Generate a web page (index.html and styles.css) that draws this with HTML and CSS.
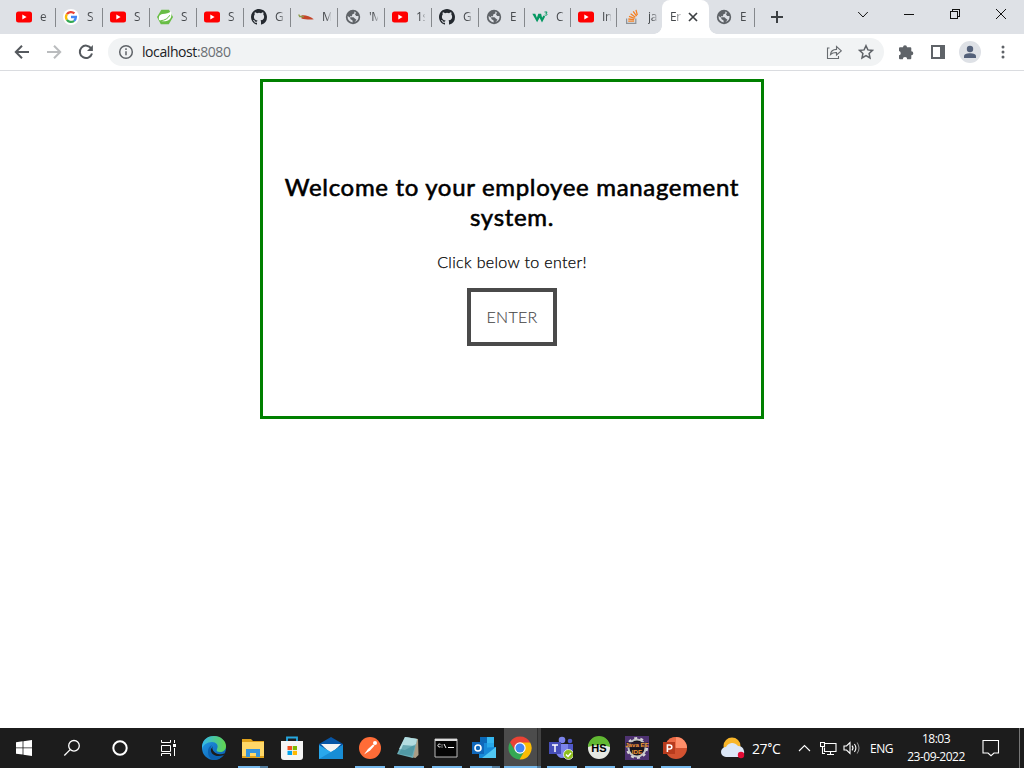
FILE: index.html
```html
<!DOCTYPE html>
<html lang="en">
<head>
<meta charset="utf-8">
<title>Employee management</title>
<link rel="stylesheet" href="styles.css">
</head>
<body>
<svg class="defs" width="0" height="0">
  <symbol id="youtube" viewBox="0 0 16 16"><rect y="2.5" width="16" height="11" rx="2.5" fill="#f00"/><path d="M6.3 5.6v4.8L10.6 8z" fill="#fff"/></symbol>
  <symbol id="google" viewBox="0 0 16 16"><circle cx="8" cy="8" r="8" fill="#fff"/><g fill="none" stroke-width="2.3"><path d="M3.9 5.2A5 5 0 0 1 11.4 4.4" stroke="#ea4335"/><path d="M3.9 5.2A5 5 0 0 0 3.9 10.8" stroke="#fbbc05"/><path d="M3.9 10.8A5 5 0 0 0 11.1 11.8" stroke="#34a853"/><path d="M8 8H12.9A5 5 0 0 1 11.1 11.8" stroke="#4285f4"/></g></symbol>
  <symbol id="spring" viewBox="0 0 16 16"><path d="M4.400 .7h7.600L16 8l-4.200 7.300H3.800L0 8z" fill="#68bd45"/><path d="M14 2.300C15.200 7 14 11.200 9.500 12 6.500 12.500 3.600 12.300 2.200 11 1.200 8 2.400 5.600 5.600 5 9 4.500 12 4.700 14 2.300z" fill="#fff"/><path d="M3.300 11.800C8 11.400 11 9.500 12.800 6.200" stroke="#68bd45" fill="none"/></symbol>
  <symbol id="github" viewBox="0 0 16 16"><path fill="#24292f" d="M8 0C3.58 0 0 3.58 0 8c0 3.54 2.29 6.53 5.47 7.59.4.07.55-.17.55-.38 0-.19-.01-.82-.01-1.49-2.01.37-2.53-.49-2.69-.94-.09-.23-.48-.94-.82-1.13-.28-.15-.68-.52-.01-.53.63-.01 1.08.58 1.23.82.72 1.21 1.87.87 2.33.66.07-.52.28-.87.51-1.07-1.78-.2-3.64-.89-3.64-3.95 0-.87.31-1.59.82-2.15-.08-.2-.36-1.02.08-2.12 0 0 .67-.21 2.2.82a7.6 7.6 0 0 1 4 0c1.53-1.04 2.2-.82 2.2-.82.44 1.1.16 1.92.08 2.12.51.56.82 1.27.82 2.15 0 3.07-1.87 3.75-3.65 3.95.29.25.54.73.54 1.48 0 1.07-.01 1.93-.01 2.2 0 .21.15.46.55.38A8 8 0 0 0 16 8c0-4.42-3.58-8-8-8z"/></symbol>
  <symbol id="chili" viewBox="0 0 16 16"><path d="M3.500 6.500c3-.9 8.500 1 12.300 3.700C13 11 7 10.600 3.500 9.500z" fill="#c4452a"/><path d="M.7 5.500l1 2 3-.2 1 1" fill="none" stroke="#8a9a48" stroke-width="1.300"/></symbol>
  <symbol id="globe" viewBox="0 0 16 16"><circle cx="8" cy="8" r="7.200" fill="#5f6368"/><path d="M9 2.500l.6 1.700-2.400 1.200-.2 1.900H5v1h3.500l1.300 1.300 1.700 1.100-2 2.200a5.400 5.400 0 0 0 4-5.800L11.200 7 10 5.500l1-2.100zM2.600 7.700a5.500 5.500 0 0 0 5 5.700v-2L5.300 10V8.800L2.600 7z" fill="#dee1e6"/></symbol>
  <symbol id="wthree" viewBox="0 0 16 16"><path d="M.3 4.800h3l1.600 4 1.400-4h2.800l1 4 1.300-2.400 1.800 1-3.200 6-2.400-4.600-2.500 4.400z" fill="#059862"/><path d="M12.500 3h2.600l-1.200 1.500c2.100 0 1.500 2.400-1.300 1.500" stroke="#059862" fill="none"/></symbol>
  <symbol id="stack" viewBox="0 0 16 16"><path d="M2.600 9.500v4.800h9.200V9.500" fill="none" stroke="#8d9297" stroke-width="1.200"/><g stroke="#f48024" stroke-width="1.300"><path d="M4.200 12.200h6M4.300 10l5.900.7M5 7.400l5.700 1.900M6.600 4.700l4.800 3.600M9.200 2.300l3.400 4.800M12 .9l1.300 5.200"/></g></symbol>
</svg>

<header class="tabstrip">
  <div class="tab first"><svg class="fav"><use href="#youtube"/></svg><span class="tab-title">e</span></div>
  <div class="tab"><svg class="fav"><use href="#google"/></svg><span class="tab-title">S</span></div>
  <div class="tab"><svg class="fav"><use href="#youtube"/></svg><span class="tab-title">S</span></div>
  <div class="tab"><svg class="fav"><use href="#spring"/></svg><span class="tab-title">S</span></div>
  <div class="tab"><svg class="fav"><use href="#youtube"/></svg><span class="tab-title">S</span></div>
  <div class="tab"><svg class="fav"><use href="#github"/></svg><span class="tab-title">G</span></div>
  <div class="tab"><svg class="fav"><use href="#chili"/></svg><span class="tab-title">M</span></div>
  <div class="tab"><svg class="fav"><use href="#globe"/></svg><span class="tab-title">'M</span></div>
  <div class="tab"><svg class="fav"><use href="#youtube"/></svg><span class="tab-title">1s</span></div>
  <div class="tab"><svg class="fav"><use href="#github"/></svg><span class="tab-title">G</span></div>
  <div class="tab narrow"><svg class="fav"><use href="#globe"/></svg><span class="tab-title">E</span></div>
  <div class="tab narrow"><svg class="fav"><use href="#wthree"/></svg><span class="tab-title">C</span></div>
  <div class="tab narrow"><svg class="fav"><use href="#youtube"/></svg><span class="tab-title">In</span></div>
  <div class="tab narrow"><svg class="fav"><use href="#stack"/></svg><span class="tab-title">ja</span></div>
  <div class="tab active"><span class="tab-title">En</span><svg class="close" viewBox="0 0 10 10"><path d="M1 1l8 8M9 1l-8 8"/></svg></div>
  <div class="tab after"><svg class="fav"><use href="#globe"/></svg><span class="tab-title">E</span></div>
  <div class="tab-end"></div>
  <svg class="plus" viewBox="0 0 12 12"><path d="M6 0v12M0 6h12"/></svg>
  <div class="window-controls">
    <svg viewBox="0 0 12 12"><path d="M1.200 4l4.800 5 4.800-5"/></svg>
    <svg viewBox="0 0 12 12" class="crisp"><path d="M1 6.500h10"/></svg>
    <svg viewBox="0 0 12 12" class="crisp"><path d="M1.500 3.500h7v7h-7zM3.500 3V1.500h7v7H9"/></svg>
    <svg viewBox="0 0 12 12"><path d="M1 1l10 10M11 1L1 11"/></svg>
  </div>
</header>

<nav class="toolbar">
  <svg class="nav-icon" viewBox="0 0 16 16"><path d="M15 8H2M8 1.800L1.800 8 8 14.200"/></svg>
  <svg class="nav-icon disabled" viewBox="0 0 16 16"><path d="M1 8h13M8 1.800L14.200 8 8 14.200"/></svg>
  <svg class="nav-icon" viewBox="0 0 16 16"><path d="M13.200 4.400A6.200 6.200 0 1 0 14 9.500"/><path d="M14.900 1v6H9z" class="solid"/></svg>
  <div class="omnibox">
    <svg class="info" viewBox="0 0 16 16"><circle cx="8" cy="8" r="6.300"/><path d="M8 7.200v4M8 4.300v1.600"/></svg>
    <span class="url">localhost<span class="port">:8080</span></span>
    <svg class="share" viewBox="0 0 16 16"><path d="M3.500 4H1.500v10.500h11V12M4.500 10.500c.3-3.500 2.400-5 6-5.100V2.500L15.300 6.800l-4.800 4.200V8.500C8 8.400 6 9 4.500 10.500z"/></svg>
    <svg class="star" viewBox="0 0 16 16"><path d="M8 1.700l1.900 4.200 4.600.5-3.400 3.100.9 4.500-4-2.300L4 14l.9-4.500-3.400-3.100 4.600-.5z"/></svg>
  </div>
  <svg class="ext" viewBox="0 0 16 16"><path d="M5 3.200a2 2 0 0 1 4 0h3.300q1 0 1 1v3a2 2 0 0 1 0 4v3q0 1-1 1H9.200a2.200 2.200 0 0 0-4.400 0H2q-1 0-1-1v-2.900a2.200 2.200 0 0 0 0-4.300V4.200q0-1 1-1z"/></svg>
  <svg class="panel" viewBox="0 0 14 14"><path d="M0 0h14v14H0z"/><path d="M2 2h7v10H2z" fill="#fff"/></svg>
  <div class="avatar"><svg viewBox="0 0 14 14"><circle cx="7" cy="4" r="3.200"/><path d="M1 13v-1.800C1 9 4.300 8.300 7 8.300s6 .7 6 2.900V13z"/></svg></div>
  <svg class="dots" viewBox="0 0 4 14"><circle cx="2" cy="2" r="1.500"/><circle cx="2" cy="7" r="1.500"/><circle cx="2" cy="12" r="1.500"/></svg>
</nav>

<main class="page">
  <section class="welcome">
    <h2>Welcome to your employee management<br>system.</h2>
    <p>Click below to enter!</p>
    <a class="enter">ENTER</a>
  </section>
</main>

<footer class="taskbar">
  <div class="sys"><svg width="16" height="16" viewBox="0 0 16 16" fill="#fff"><path d="M0 2.200l6.600-.9v6.200H0zM7.400 1.200L16 0v7.500H7.400zM0 8.300h6.600v6.300L0 13.700zM7.400 8.300H16V16l-8.600-1.200z"/></svg></div>
  <div class="sys"><svg width="18" height="18" viewBox="0 0 18 18" fill="none" stroke="#fff" stroke-width="1.300"><circle cx="11" cy="6.800" r="5.300"/><path d="M7.200 10.600L1.300 16.500"/></svg></div>
  <div class="sys"><svg width="18" height="18" viewBox="0 0 18 18" fill="none" stroke="#fff" stroke-width="2"><circle cx="9" cy="9" r="6.700"/></svg></div>
  <div class="sys"><svg width="17" height="16" viewBox="0 0 17 16" fill="none" stroke="#fff"><path d="M1.500 0v2.500h9V0M1.500 5.500h9v6h-9zM1.500 16v-2.500h9V16M14.500 0v3M14.500 8v8"/><path d="M13 4h3v3h-3z" fill="#fff" stroke="none"/></svg></div>

  <div class="app wide"><svg viewBox="0 0 24 24"><defs><linearGradient id="edgeA" x2="1"><stop stop-color="#32b8ef"/><stop offset="1" stop-color="#62d64b"/></linearGradient><linearGradient id="edgeB" y2="1"><stop stop-color="#239be6"/><stop offset="1" stop-color="#0759ae"/></linearGradient></defs><circle cx="12" cy="12" r="12" fill="url(#edgeB)"/><path d="M0 10C1 3 6 0 12 0c7 0 12 5 12 10 0 4-3 6-6 6-3 0-4-1-3-3 2-4-1-7-5-7C5 6 1 9 0 13z" fill="url(#edgeA)"/><path d="M10 9c-4 6 2 12 12 9-2 4-7 6-11 6C5 22 4 11 10 9z" fill="#0c60ae"/><path d="M11 10c-2 3 1 7 5 8 3 .7 5 .3 7-.8l-1 1.800c-8 3-14-1-13-6z" fill="#1c1c1c"/></svg></div>
  <div class="app wide running grouped"><svg viewBox="0 0 24 24"><path d="M1 3h9l2 2h11v17H1z" fill="#e0a21b"/><path d="M1 6h22v14H1z" fill="#ffd868"/><path d="M5 21v-8h14v8h-4v-4H9v4z" fill="#3594dc"/></svg></div>
  <div class="app wide"><svg viewBox="0 0 24 24"><path d="M7 6V1.500h10V6" fill="none" stroke="#26a8e0" stroke-width="1.800"/><path d="M1 5h22v16q0 3-3 3H4q-3 0-3-3z" fill="#f5f5f5"/><path d="M7.500 10H12v4H7.500z" fill="#f25022"/><path d="M12.700 10H17v4h-4.300z" fill="#7fba00"/><path d="M7.500 14.800H12V19H7.500z" fill="#00a4ef"/><path d="M12.700 14.800H17V19h-4.300z" fill="#ffb900"/></svg></div>
  <div class="app wide"><svg viewBox="0 0 24 24"><path d="M0 8l12-7 12 7v4H0z" fill="#0755a5"/><path d="M2 8h20l-8 8h-4z" fill="#f4f4f4"/><path d="M0 9l12 7 12-7v14H0z" fill="#29a8ed"/><path d="M0 23L24 9v14z" fill="#188dd5"/></svg></div>
  <div class="app wide running"><svg viewBox="0 0 24 24"><circle cx="12" cy="12" r="11" fill="#ff6c37"/><path d="M6 18.500l4-5.500 5-4.500 1.600 1-4.500 5z" fill="#fff"/><circle cx="17" cy="7" r="2" fill="#fff"/></svg></div>
  <div class="app running"><svg viewBox="0 0 24 24"><path d="M9 1l13 2 .5 16-3 3-5-1z" fill="#a99c85"/><path d="M9 1l12 2-4 19L1 18z" fill="#6badb7"/><path d="M9 1l12 2-1 5-11 6-6-1z" fill="#b3dce0"/><path d="M7 9l-4 9 13 2 3-10z" fill="#438f9b" opacity=".65"/></svg></div>
  <div class="app running"><svg viewBox="0 0 24 24"><path d="M1 3h22v18H1z" fill="#050505" stroke="#b9b9b9"/><path d="M1 3h22v2H1z" fill="#ddd"/><path d="M6.500 8.300C3 7 3 12 6.500 10.800M8 8.500v1M8 10.500v1M10 8l2 4M14 11.500h6" stroke="#fff" fill="none"/></svg></div>
  <div class="app running grouped"><svg viewBox="0 0 24 24"><path d="M8 1h14v17H8z" fill="#1689d8"/><path d="M15 1h7v6h-7z" fill="#35b8f1"/><path d="M15 7h7v6h-7z" fill="#28a8ea"/><path d="M8 1h7v6H8z" fill="#0b69b8"/><path d="M7 12l17-1v11H7z" fill="#1689d8"/><path d="M24 11v11H10z" fill="#50c7f3"/><path d="M0 6h12v12H0z" fill="#0f67ba"/><circle cx="6" cy="12" r="3" fill="none" stroke="#fff" stroke-width="1.600"/></svg></div>
  <div class="app running current"><svg viewBox="0 0 24 24"><path d="M2 6.200A11.500 11.500 0 0 1 22 6.200L12 12z" fill="#ea4335"/><path d="M2 6.200A11.500 11.500 0 0 0 11.500 23.500L17 15l-5-3-5 2z" fill="#34a853"/><path d="M12 6.500h10.200A11.500 11.500 0 0 1 11.500 23.500L17 14z" fill="#fbbc05"/><path d="M2 6.200L7 14.500l5-8h10z" fill="#ea4335"/><circle cx="12" cy="12" r="5.700" fill="#fff"/><circle cx="12" cy="12" r="4.500" fill="#4285f4"/></svg></div>
  <div class="app running"><svg viewBox="0 0 24 24"><circle cx="13" cy="4" r="3.300" fill="#7b83eb"/><circle cx="21" cy="5" r="2.300" fill="#5059c9"/><path d="M15 8h9v8q-1 4-5 4h-4z" fill="#5059c9"/><path d="M7 8h12v9q0 5-6 5-4 0-6-5z" fill="#7b83eb"/><path d="M0 6h12v12H0z" fill="#464eb8"/><path d="M3 9h6M6 9v7" stroke="#fff" stroke-width="1.500"/><circle cx="19.500" cy="18.500" r="5" fill="#8dbe1c" stroke="#fff" stroke-width=".7"/><path d="M17 18.500l2 2 3-3.500" fill="none" stroke="#fff" stroke-width="1.500"/></svg></div>
  <div class="app running"><svg viewBox="0 0 24 24"><circle cx="12" cy="12" r="11" fill="#e6e9e3"/><path d="M1 11a11 11 0 0 1 22 0q-11-4-22 0z" fill="#61b832"/><text x="12" y="16" text-anchor="middle" class="hs">HS</text></svg></div>
  <div class="app running"><svg viewBox="0 0 24 24"><path d="M0 0h24v24H0z" fill="#4e3271"/><circle cx="12" cy="12" r="8.500" fill="#17141c" stroke="#c5c5c5" stroke-width="2"/><circle cx="12" cy="12" r="10" fill="none" stroke="#d7d7d7" stroke-width="2" stroke-dasharray="3 3.280"/><path d="M1 6h22v5.500H1z" fill="#2a1b33" opacity=".8"/><text x="12" y="11" text-anchor="middle" class="java">Java EE</text><text x="12" y="17.500" text-anchor="middle" class="java">IDE</text></svg></div>
  <div class="app running"><svg viewBox="0 0 24 24"><circle cx="13" cy="12" r="11" fill="#d35230"/><path d="M13 1a11 11 0 0 1 11 11H13z" fill="#ff8f6b"/><path d="M3 7a11 11 0 0 1 10-6v11z" fill="#ed6c47"/><path d="M0 6h12v12H0z" fill="#b83b1d"/><path d="M4.400 16V9H6.500q2.300 0 2.300 2t-2.300 2h-2" fill="none" stroke="#fff" stroke-width="1.600"/></svg></div>

  <div class="tray">
    <svg class="weather" viewBox="0 0 24 22"><circle cx="11" cy="9" r="8.500" fill="#f9b62a"/><path d="M5 20a5 5 0 0 1 0-10 7 7 0 0 1 12-1q5 0 6 5t-4 6z" fill="#dce7f7"/><circle cx="20" cy="18" r="3.200" fill="#e30b35"/></svg>
    <span class="temp">27<span class="degree">°</span>C</span>
    <svg class="chevron" viewBox="0 0 13 8"><path d="M1 7l5.500-5.500L12 7"/></svg>
    <svg class="network" viewBox="0 0 17 15"><path d="M5 2.500h11v8H4.500v-4M10.500 10.500v3M7 13.500h7M.5 1.500h4v4h-4zM2.500 5.500v7H5"/></svg>
    <svg class="volume" viewBox="0 0 17 14"><path d="M1 5v4h2.500L7 12.500v-11L3.500 5zM9 4.700q2 2.300 0 4.600M11.400 3q3 4 0 8"/><path d="M14 1.500q4 5.500 0 11" opacity=".5"/></svg>
    <span class="lang">ENG</span>
    <div class="clock"><span class="time">18:03</span><span class="date">23-09-2022</span></div>
    <svg class="notice" viewBox="0 0 18 17"><path d="M1 .5h15.500v12.500H12l-3 2.700L6 13H1z"/></svg>
    <div class="desktop-edge"></div>
  </div>
</footer>
</body>
</html>
```

FILE: styles.css
```css
* { box-sizing: border-box; }
body { margin: 0; width: 1024px; height: 768px; overflow: hidden; background: #fff; display: flex; flex-direction: column; font-family: "Open Sans", sans-serif; }
svg { display: block; flex: none; }
.defs { position: absolute; }

.tabstrip { height: 34px; background: #dee1e6; display: flex; padding-left: 8px; flex: none; }
.tab { width: 47px; height: 34px; display: flex; align-items: center; flex: none; padding-left: 8px; background: linear-gradient(#85888c, #85888c) 0 8px / 1px 19px no-repeat; }
.tab.first, .tab.after { background: none; }
.tab.after { width: 45px; padding-left: 7px; }
.narrow { width: 46px; }
.tab.active { width: 47px; background: #fff; border-radius: 8px 8px 0 0; padding-left: 8px; position: relative; }
.active::before, .active::after { content: ""; position: absolute; bottom: 0; width: 8px; height: 8px; }
.active::before { left: -8px; background: radial-gradient(circle at 0 0, transparent 7.5px, #fff 8px); }
.active::after { right: -8px; background: radial-gradient(circle at 100% 0, transparent 7.5px, #fff 8px); }
.fav { width: 16px; height: 16px; }
.tab-title { width: 9px; margin-left: 8px; overflow: hidden; white-space: nowrap; font-size: 12px; line-height: 18px; letter-spacing: -.3px; color: #45484c; -webkit-mask-image: linear-gradient(90deg, #000 45%, rgba(0,0,0,.2)); }
.active .tab-title { width: 11px; margin-left: 0; }
.close { width: 10px; height: 10px; margin-left: 7px; fill: none; stroke: #3c4043; stroke-width: 1.7; }
.tab-end { width: 1px; height: 19px; margin-top: 8px; background: #85888c; }
.plus { width: 12px; height: 12px; margin: 11px 0 0 16px; stroke: #3c4043; stroke-width: 2; }
.window-controls { display: flex; gap: 34px; margin: 8px 0 0 74px; }
.window-controls svg { width: 12px; height: 12px; stroke: #111; fill: none; }
.crisp { shape-rendering: crispEdges; }

.toolbar { height: 37px; flex: none; border-bottom: 1px solid #dadce0; display: flex; align-items: center; padding: 0 0 0 14px; }
.nav-icon { width: 16px; height: 16px; margin-right: 16px; fill: none; stroke: #55595e; stroke-width: 2; }
.nav-icon.disabled { stroke: #babcbe; }
.nav-icon .solid { fill: #55595e; stroke: none; }
.omnibox { width: 776px; height: 28px; flex: none; margin-left: -2px; border-radius: 14px; background: #f1f3f4; display: flex; align-items: center; padding: 0 10px; }
.info { width: 16px; height: 16px; fill: none; stroke: #5f6368; stroke-width: 1.5; }
.url { width: 92px; margin-left: 8px; font-size: 14px; line-height: 20px; letter-spacing: -.42px; color: #202124; white-space: nowrap; }
.port { color: #6b6f74; }
.share { width: 16px; height: 16px; margin-left: auto; fill: none; stroke: #686c70; stroke-width: 1.1; }
.star { width: 16px; height: 16px; margin-left: 16px; fill: none; stroke: #5f6368; stroke-width: 1.5; }
.ext { width: 16px; height: 16px; margin-left: 14px; fill: #5f6368; }
.panel { width: 14px; height: 14px; margin-left: 17px; fill: #5f6368; }
.avatar { width: 22px; height: 22px; flex: none; margin-left: 14px; border-radius: 50%; background: #dee1e6; display: grid; place-items: center; }
.avatar svg { width: 14px; height: 14px; fill: #54617a; }
.dots { width: 4px; height: 14px; margin-left: 20px; fill: #5f6368; }

.page { flex: 1; padding-top: 8px; }
.welcome { width: 504px; height: 340px; margin: 0 auto; border: 3px solid green; display: flex; flex-direction: column; align-items: center; padding-top: 90px; font-family: Lato, sans-serif; color: #000; }
.welcome h2 { margin: 0; font-size: 24px; font-weight: 400; -webkit-text-stroke: .6px #000; line-height: 30px; letter-spacing: .67px; text-align: center; white-space: nowrap; }
.welcome p { margin: 20px 0 0; font-size: 16px; font-weight: 300; -webkit-text-stroke: .25px #000; line-height: 20px; letter-spacing: .34px; white-space: nowrap; }
.enter { width: 90px; height: 58px; margin-top: 16px; border: 4px solid #4a4a4a; display: grid; place-items: center; padding-bottom: 2px; font-size: 16px; font-weight: 300; -webkit-text-stroke: .15px #4a4a4a; letter-spacing: .3px; color: #4a4a4a; }

.taskbar { height: 40px; flex: none; background: #1c1c1c; display: flex; color: #fff; }
.sys { width: 48px; height: 40px; display: grid; place-items: center; flex: none; }
.app { width: 38px; height: 40px; flex: none; display: flex; justify-content: center; align-items: center; position: relative; }
.app.wide { width: 39px; }
.sys + .app { margin-left: 2px; }
.app svg { width: 24px; height: 24px; }
.running::after { content: ""; position: absolute; left: 5px; bottom: 0; width: 30px; height: 2px; background: #76b9ed; }
.grouped::after { background: linear-gradient(90deg, #76b9ed 22px, #527c9d 22px); }
.app.current { background: linear-gradient(90deg, #4c4c4c 33px, #303030 33px, #303030 34px, #424242 34px); width: 37px; margin: 0 1px; padding-right: 5px; }
.current::after { left: 0; width: 37px; background: linear-gradient(90deg, #76b9ed 33px, #527c9d 33px); }
.hs { font: bold 11px "Liberation Sans", sans-serif; }
.java { font: bold 6.2px "Liberation Sans", sans-serif; fill: #f59935; }
.tray { flex: 1; display: flex; align-items: center; margin-left: 27px; font-size: 12px; white-space: nowrap; }
.tray svg { fill: none; stroke: #fff; stroke-width: 1.1; }
.tray .weather { width: 24px; height: 22px; stroke: none; }
.temp { width: 30px; margin-left: 7px; font-size: 14px; letter-spacing: -.4px; }
.degree { font-family: Roboto, sans-serif; }
.chevron { width: 13px; height: 8px; margin-left: 16px; }
.network { width: 17px; height: 15px; margin-left: 9px; }
.volume { width: 17px; height: 14px; margin-left: 6px; }
.lang { width: 25px; margin-left: 10px; letter-spacing: -.45px; }
.clock { width: 60px; margin-left: 11px; display: flex; flex-direction: column; align-items: center; line-height: 18px; letter-spacing: -.5px; }
.notice { width: 18px; height: 17px; margin-left: 16px; }
.desktop-edge { width: 1px; height: 40px; margin-left: 19px; background: #777; }
```
